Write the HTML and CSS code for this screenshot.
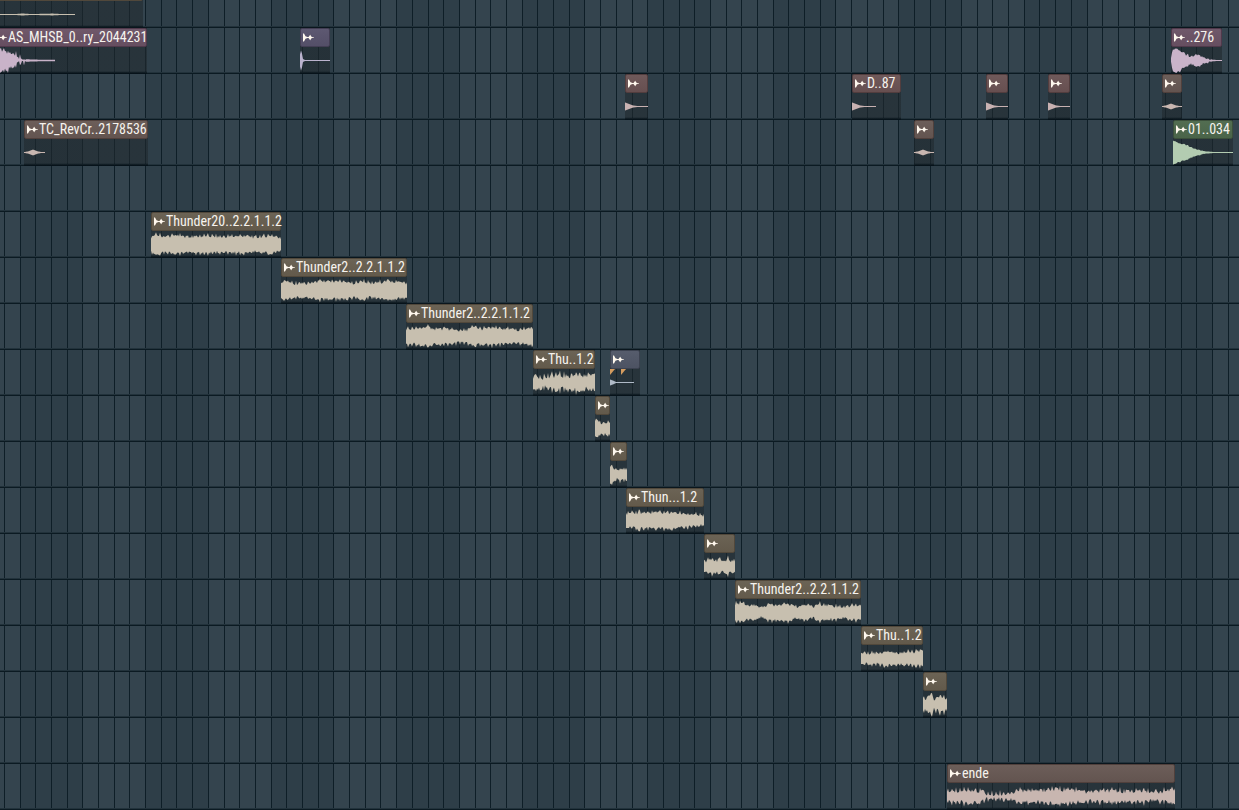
FILE: index.html
```html
<!DOCTYPE html>
<html lang="en">
<head>
<meta charset="utf-8">
<title>Playlist</title>
<link rel="stylesheet" href="styles.css">
</head>
<body>
<svg class="sprite" aria-hidden="true">
  <symbol id="clip-icon" viewBox="0 0 11 9">
    <path d="M0 0.5H1L2.5 3.2L4.5 4H5.5L7 2V1.5L8 3L8.8 4L11 4.2V4.8L8.8 5L8 6L7 7.5V7L5.5 5H4.5L2.5 5.8L1 8.5H0Z"/>
  </symbol>
</svg>
<main class="playlist">
  <svg class="grid" aria-hidden="true"></svg>
  <div class="tracks"></div>
</main>
<script src="playlist.js"></script>
</body>
</html>
```
FILE: styles.css
```css
* { box-sizing: border-box; }
body {
  margin: 0;
  background: #2e3e48;
  font-family: "Roboto Condensed", "Liberation Sans Narrow", "DejaVu Sans Condensed", sans-serif;
  font-size: 14px;
  color: #f6f3ee;
}
.sprite { position: absolute; width: 0; height: 0; }
.playlist { position: relative; overflow: hidden; }
.grid { position: absolute; inset: 0; width: 100%; height: 100%; shape-rendering: crispEdges; }
.bar { fill: #34444e; }
.line { fill: #0e1e27; }
.tracks { position: relative; }
.track {
  position: relative;
  height: 46px;
  border-bottom: 1px solid #0b1a22;
  box-shadow: inset 0 -1px #22323b;
}
.track.partial { height: 28px; }
.clip {
  position: absolute;
  bottom: -1px;
  left: var(--x);
  width: var(--w);
  height: 46px;
  background: linear-gradient(#20292e98 43px, #051017c0 45px, #051017c0);
  box-shadow: 0 -1px #0a161d;
}
.name {
  display: flex;
  align-items: center;
  gap: 1px;
  height: 19px;
  padding-left: 2px;
  white-space: nowrap;
  line-height: 17px;
  background: linear-gradient(var(--head), var(--low));
  border: 1px solid var(--edge);
  border-radius: 2px;
}
.icon { flex: none; width: 11px; height: 9px; fill: #fff8ee; }
.wave { display: block; width: 100%; height: 27px; fill: var(--wave); }
.marker { fill: #d59c5f; }
.thunder { --head: #6b6355; --low: #635a4b; --edge: #51483b; --wave: #c7bfaf; }
.crash { --head: #6c5e59; --low: #635450; --edge: #50403c; --wave: #c8b6b0; }
.hit { --head: #6f595a; --low: #674f50; --edge: #523d3e; --wave: #c8b1b1; }
.plum { --head: #6f586a; --low: #664e60; --edge: #50394b; --wave: #c9b3c9; }
.violet { --head: #5d5871; --low: #544f68; --edge: #433e54; --wave: #bbb3ce; }
.slate { --head: #565c6c; --low: #4d5363; --edge: #3c4250; --wave: #b0bac7; }
.green { --head: #526d51; --low: #4a6449; --edge: #3b4f3b; --wave: #b3ccb1; }
```
FILE: playlist.js
```js
const CELL = 15.69, ORIGIN = 4.4;

// Envelopes are [offset, amplitude] pairs; rough is the jitter of the outline.
const HIT = [[0, 4], [3, 3], [8, 1], [13, 0.5]];
const SWELL = [[0, 0.5], [4, 1], [9, 3], [14, 1], [18, 0.5]];
const thunder = (x, w, name, env, rough = 3) => ({ x, w, name, kind: 'thunder', env, rough });
const hit = (x, w, name = '', end = w) => ({ x, w, name, kind: 'hit', env: HIT, end, rough: 0 });

const tracks = [
  [{ x: -7, w: 150, name: '', kind: 'thunder', env: [[0, .5], [24, .6], [29, 1], [38, .5], [60, .9], [68, .5]], end: 82, rough: 0 }],
  [
    { x: -7, w: 154, name: 'AS_MHSB_0..ry_2044231', kind: 'plum', env: [[0, 13], [9, 12], [13, 10], [16, 8], [18, 6], [22, 6], [26, 3.5], [30, 1.4], [46, .8]], end: 62, rough: 5 },
    { x: 300, w: 30, name: '', kind: 'violet', env: [[0, 6], [1, 10], [2, 7], [3, 1.5], [5, .5]], rough: 0 },
    { x: 1171, w: 51, name: '..276', kind: 'plum', env: [[0, 2], [2, 11], [6, 12], [11, 9], [15, 6], [20, 4], [25, 6], [29, 5], [34, 2.5], [42, .8], [46, .5]], rough: 2 }
  ],
  [hit(625, 23), hit(852, 49, 'D..87', 24), hit(986, 22), hit(1048, 22),
    { x: 1162, w: 20, name: '', kind: 'crash', env: SWELL, rough: 0 }],
  [
    { x: 24, w: 124, name: 'TC_RevCr..2178536', kind: 'crash', env: SWELL, end: 21, rough: 0 },
    { x: 914, w: 20, name: '', kind: 'crash', env: SWELL, rough: 0 },
    { x: 1173, w: 60, name: '01..034', kind: 'green', env: [[0, 12], [6, 9.5], [12, 8], [18, 5.5], [24, 3], [32, 1.2], [42, .5]], rough: 1 }
  ],
  [],
  [thunder(151, 130, 'Thunder20..2.2.1.1.2', [[0, 8], [6, 10], [14, 8], [24, 9.5], [38, 8], [56, 9], [70, 8], [92, 9], [104, 7.5], [120, 9.5], [129, 7]])],
  [thunder(281, 126, 'Thunder2..2.2.1.1.2', [[0, 9], [6, 10], [13, 6.5], [18, 8], [27, 7], [37, 9.5], [50, 9], [66, 9], [72, 7], [82, 10], [90, 7], [106, 10], [116, 9], [125, 8]])],
  [thunder(406, 127, 'Thunder2..2.2.1.1.2', [[0, 8], [10, 8], [22, 10], [28, 8], [39, 8], [58, 6], [68, 10], [75, 8], [86, 9], [97, 8], [112, 7], [126, 9]])],
  [thunder(533, 62, 'Thu..1.2', [[0, 7], [15, 6], [21, 8], [35, 7], [46, 9], [53, 7], [61, 8]], 5),
    { x: 610, w: 30, name: '', kind: 'slate', env: [[0, 3], [3, 2], [6, .5]], end: 24, rough: 0, markers: [0, 11] }],
  [thunder(595, 15, '', [[0, 7], [3, 9], [6, 5], [10, 6], [14, 7]])],
  [thunder(610, 17, '', [[0, 9], [3, 7], [7, 5], [11, 7], [16, 6]])],
  [thunder(626, 78, 'Thun...1.2', [[0, 7], [11, 8], [13, 11], [15, 8], [42, 8.5], [60, 7], [70, 6], [77, 5]])],
  [thunder(704, 31, '', [[0, 5], [7, 8], [12, 6], [15, 8], [20, 5], [24, 9], [27, 5], [30, 7]])],
  [thunder(735, 126, 'Thunder2..2.2.1.1.2', [[0, 9], [6, 10], [14, 7], [20, 8], [26, 5], [32, 8], [45, 8], [51, 10], [60, 6], [72, 8], [78, 6], [84, 9], [98, 7], [110, 6], [120, 8], [125, 7]])],
  [thunder(861, 62, 'Thu..1.2', [[0, 6], [20, 6], [25, 8], [33, 6], [52, 7], [61, 8]])],
  [thunder(923, 24, '', [[0, 7], [5, 7], [8, 11], [11, 6], [18, 8], [23, 7]], 4)],
  [],
  [{ x: 947, w: 228, name: 'ende', kind: 'crash', env: [[0, 5], [20, 7], [35, 6], [41, 2.5], [65, 4], [70, 7], [90, 6], [105, 8], [125, 7], [140, 5], [155, 6], [180, 6], [198, 6], [209, 5], [227, 7]], rough: 4 }]
];

function level(env, t) {
  for (let i = 1; i < env.length; i++) {
    const [a, va] = env[i - 1], [b, vb] = env[i];
    if (t <= b) return va + (vb - va) * (t - a) / (b - a);
  }
  return env[env.length - 1][1];
}

function jitter(n) {
  const v = Math.sin(n * 12.9898) * 43758.5453;
  return (n % 4 === 0 ? 0.6 : 0) + (v - Math.floor(v)) - 0.7;
}

function outline(clip) {
  const mid = 13.5, end = clip.end || clip.w, top = [], low = [];
  for (let t = 0; t <= end; t++) {
    const a = level(clip.env, t);
    const r = a > 1.3 ? clip.rough : 0;
    const up = Math.min(12.5, Math.max(.5, a + r * jitter(clip.x + t)));
    const down = Math.min(12.5, Math.max(.5, a + r * jitter(clip.x + t + 500)));
    top.push(`${t} ${(mid - up).toFixed(1)}`);
    low.unshift(`${t} ${(mid + down).toFixed(1)}`);
  }
  return `M${top.join('L')}L${low.join('L')}Z`;
}

function clipMarkup(clip) {
  const flags = (clip.markers || []).map(m => `<path class="marker" d="M${m} 0h5l-5 6z"/>`).join('');
  const title = clip.name ? `<span class="title">${clip.name}</span>` : '';
  return `<article class="clip ${clip.kind}" style="--x:${clip.x}px;--w:${clip.w}px">
    <div class="name"><svg class="icon" aria-hidden="true"><use href="#clip-icon"/></svg>${title}</div>
    <svg class="wave" aria-hidden="true"><path d="${outline(clip)}"/>${flags}</svg>
  </article>`;
}

document.querySelector('.tracks').innerHTML = tracks.map((clips, i) =>
  `<section class="track${i ? '' : ' partial'}">${clips.map(clipMarkup).join('')}</section>`).join('');

function drawGrid() {
  const grid = document.querySelector('.grid');
  const at = i => Math.floor(ORIGIN + CELL * i);
  let bars = '', lines = '';
  for (let i = -3; at(i) < window.innerWidth; i += 8)
    bars += `<rect class="bar" x="${at(i)}" y="0" width="${at(i + 4) - at(i)}" height="100%"/>`;
  for (let i = 0; at(i) < window.innerWidth; i++)
    lines += `<rect class="line" x="${at(i)}" y="0" width="1" height="100%"/>`;
  grid.innerHTML = bars + lines;
}
drawGrid();
window.addEventListener('resize', drawGrid);
```
